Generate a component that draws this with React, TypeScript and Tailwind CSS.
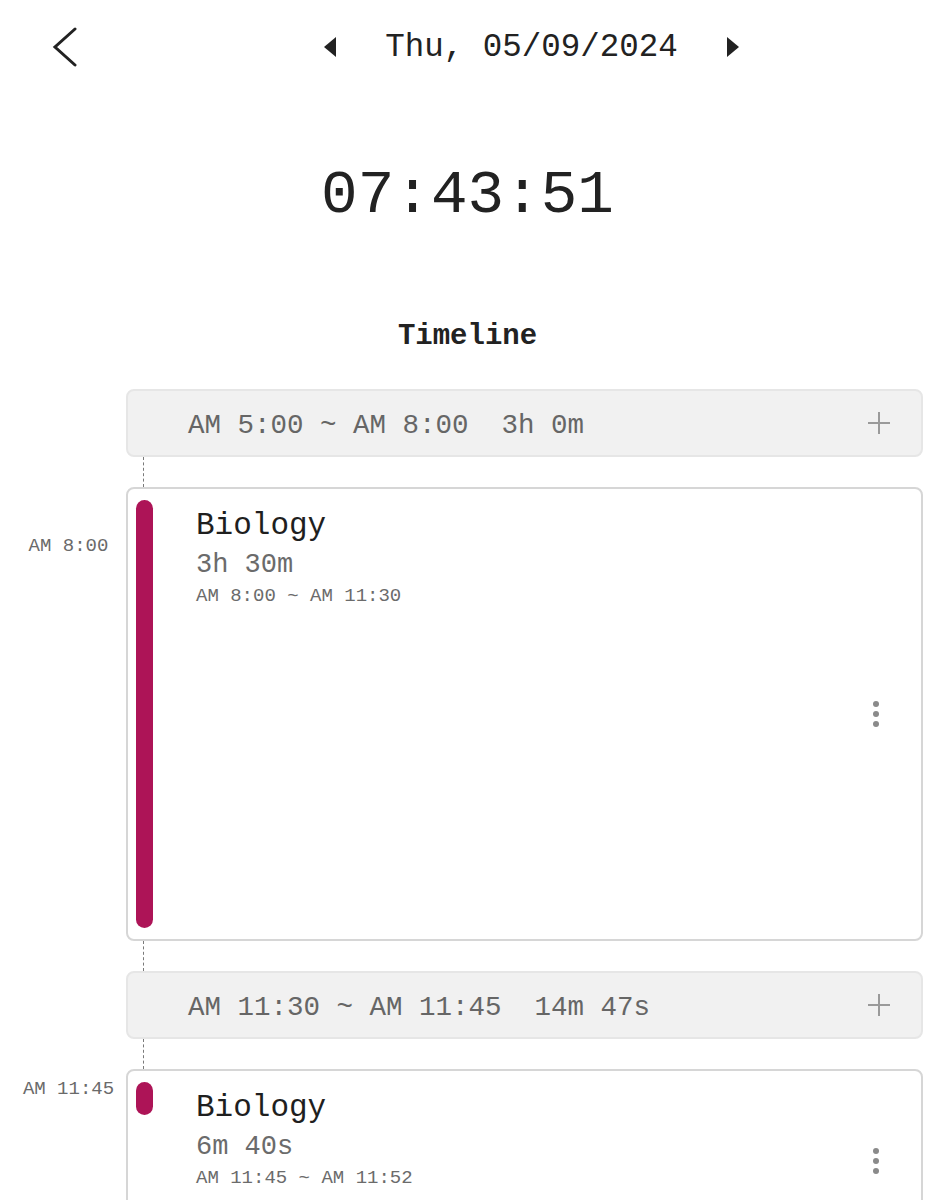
import React from "react";

const mono = { fontFamily: '"Liberation Mono", "DejaVu Sans Mono", monospace' };

function Plus() {
  return (
    <svg width="24" height="24" viewBox="0 0 24 24" className="text-[#9a9a9a]">
      <path d="M12 1v22M1 12h22" stroke="currentColor" strokeWidth="2" fill="none" />
    </svg>
  );
}

function Dots() {
  return (
    <div className="flex flex-col items-center gap-[4px]">
      <span className="h-[6px] w-[6px] rounded-full bg-[#8a8a8a]" />
      <span className="h-[6px] w-[6px] rounded-full bg-[#8a8a8a]" />
      <span className="h-[6px] w-[6px] rounded-full bg-[#8a8a8a]" />
    </div>
  );
}

function Connector() {
  return (
    <div className="flex h-[30px]">
      <div className="ml-[143px] h-full border-l border-dashed border-[#7a7a7a]" />
    </div>
  );
}

function GapRow({ text }: { text: string }) {
  return (
    <div className="flex">
      <div className="w-[126px] shrink-0" />
      <div className="mr-[12px] flex h-[68px] flex-1 items-center justify-between rounded-[8px] border-2 border-[#e6e6e6] bg-[#f1f1f1] pl-[60px] pr-[30px]">
        <span className="whitespace-pre pt-[5px] text-[27.5px] leading-none text-[#666]">{text}</span>
        <Plus />
      </div>
    </div>
  );
}

function SessionRow({
  label,
  labelTop,
  duration,
  range,
  height,
  barHeight,
}: {
  label: string;
  labelTop: number;
  duration: string;
  range: string;
  height: string;
  barHeight?: string;
}) {
  return (
    <div className="flex">
      <div className="w-[126px] shrink-0 pl-[11px] text-center">
        <div
          className="text-[19px] leading-[22px] text-[#6a6a6a]"
          style={{ marginTop: labelTop - 10 }}
        >
          {label}
        </div>
      </div>
      <div className={`mr-[12px] flex flex-1 rounded-[8px] border-2 border-[#d6d6d6] bg-white ${height}`}>
        <div
          className={`ml-[8px] mt-[11px] w-[17px] shrink-0 rounded-full bg-[#ad1457] ${
            barHeight ?? "mb-[11px] self-stretch"
          }`}
        />
        <div className="ml-[43px] flex flex-1 flex-col">
          <div className="mt-[18px] text-[31px] leading-[37px] text-[#1f1f1f]">Biology</div>
          <div className="mt-[5px] text-[27px] leading-[32px] text-[#6b6b6b]">{duration}</div>
          <div className="mt-[4px] text-[19px] leading-[22px] text-[#6b6b6b]">{range}</div>
        </div>
        <div className="mr-[42px] self-center">
          <Dots />
        </div>
      </div>
    </div>
  );
}

export default function App() {
  return (
    <div className="min-h-[1200px] w-[935px] overflow-hidden bg-white" style={mono}>
      <div className="flex h-[94px] items-center">
        <div className="flex w-[128px] justify-start pl-[52px]">
          <svg width="26" height="40" viewBox="0 0 26 40">
            <path d="M23 2 L3 20 L23 38" stroke="#222" strokeWidth="3" fill="none" strokeLinecap="round" />
          </svg>
        </div>
        <div className="flex flex-1 items-center justify-center">
          <svg width="13" height="20" viewBox="0 0 13 20">
            <path d="M12 0 L0 10 L12 20 Z" fill="#222" />
          </svg>
          <span className="mx-[48px] pt-[3px] text-[32.5px] leading-none text-[#222]">Thu, 05/09/2024</span>
          <svg width="13" height="20" viewBox="0 0 13 20">
            <path d="M1 0 L13 10 L1 20 Z" fill="#222" />
          </svg>
        </div>
      </div>

      <div className="mt-[72px] text-center text-[61px] leading-[60px] text-[#222]">07:43:51</div>

      <div className="mt-[96px] text-center text-[29px] font-bold leading-[29px] text-[#222]">Timeline</div>

      <div className="mt-[38px]">
        <GapRow text="AM 5:00 ~ AM 8:00  3h 0m" />
        <Connector />
        <SessionRow
          label="AM 8:00"
          labelTop={58}
          duration="3h 30m"
          range="AM 8:00 ~ AM 11:30"
          height="h-[454px]"
        />
        <Connector />
        <GapRow text="AM 11:30 ~ AM 11:45  14m 47s" />
        <Connector />
        <SessionRow
          label="AM 11:45"
          labelTop={19}
          duration="6m 40s"
          range="AM 11:45 ~ AM 11:52"
          height="h-[184px]"
          barHeight="h-[33px]"
        />
      </div>
    </div>
  );
}
